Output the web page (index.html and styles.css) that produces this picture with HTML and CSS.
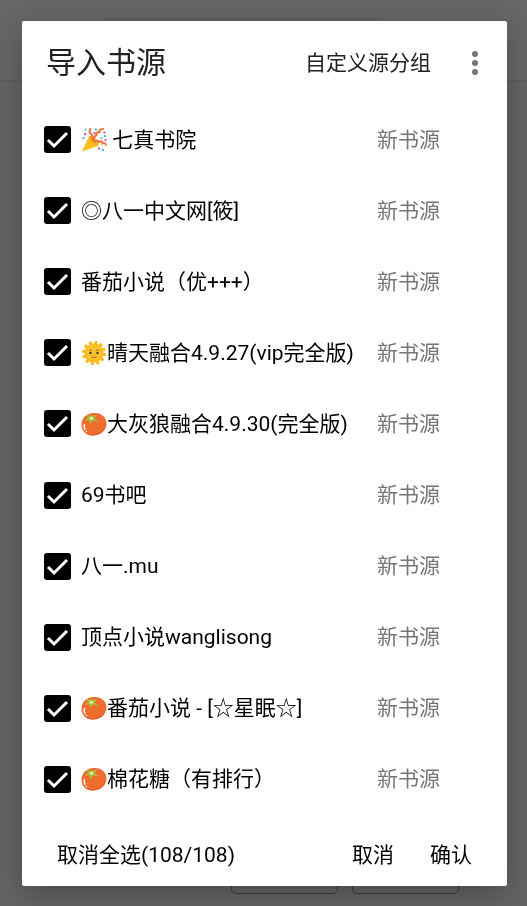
FILE: index.html
```html
<!DOCTYPE html>
<html lang="zh-CN">
<head>
  <meta charset="UTF-8" />
  <meta name="viewport" content="width=device-width, initial-scale=1.0">
  <title>导入书源</title>
  <link rel="stylesheet" href="styles.css">
</head>
<body>
  <!-- 图标 -->
  <svg class="sprite" aria-hidden="true">
    <symbol id="party" viewBox="0 0 26 26">
      <path d="M8 9 1 24.5 17 19Q16 13 8 9z" fill="#fbc21d"/>
      <path d="M8 9Q8 15 17 19 19 17 15 12 10 7 8 9z" fill="#f0ae1c"/>
      <path d="M9.500 2Q7.500 5 10 7T11 13M22 2Q18 2 18.500 5 15 5 15.500 8 13 9 12.500 13M13.500 15Q16 12 18 15 21 13 21.500 16.500 24 15 25 18" fill="none" stroke="#f0713c" stroke-width="2" stroke-linecap="round"/>
      <path d="M3.500 1.500h2v2h-2zM14 1.500h2v2h-2zM23 8h2v2h-2zM1.500 10h2v2h-2zM19.500 10h2v2h-2zM21 22h2v2h-2z" fill="#4fbbe0"/>
      <path d="M3 6h2v2H3zM12.500 5h2v2h-2zM22.500 4.500h2v2h-2zM17 20.500h2v2h-2zM23.500 12h2v2h-2z" fill="#e3518f"/>
    </symbol>
    <symbol id="sun" viewBox="0 0 26 26">
      <circle cx="13" cy="13" r="10.500" fill="none" stroke="#f9bd18" stroke-width="3" stroke-dasharray="3 2.500"/>
      <circle cx="13" cy="13" r="9.500" fill="#f9b817"/>
      <circle cx="13" cy="12.500" r="8" fill="#fbc02d"/>
      <path d="M8 10.500q1.500-1 3 0M15 10.500q1.500-1 3 0M10.500 17q2.500 1.500 5 0" fill="none" stroke="#ad6812"/>
      <circle cx="9.500" cy="13" r="1.200" fill="#4e342e"/>
      <circle cx="16.500" cy="13" r="1.200" fill="#4e342e"/>
      <path d="M12 15h2" stroke="#e59613"/>
    </symbol>
    <symbol id="tomato" viewBox="0 0 26 26">
      <path d="M13 2C20 1.500 25.500 6 25.500 12.500 25.500 19 20 24.500 12 24.500 5 24.500 .5 20 .5 14 .5 7 5 2.500 13 2z" fill="#ef6c2f"/>
      <path d="M24.500 15Q22 22 14 23 7 24 3 20 6 24.500 12 24.500 22 24 24.500 15z" fill="#e25c2b"/>
      <path d="M9 2 10.500 5.500 16 3.500 13.500 7.500 18 10.500 12 9.500 9 13 8.500 9 3.500 10 7 6.500 5 4 9 5z" fill="#a9c23a"/>
      <circle cx="10.500" cy="7.200" r="1.500" fill="#edf5c4"/>
      <path d="M3.500 13.500q-1 3 .5 5" fill="none" stroke="#fff" stroke-width="1.500" stroke-linecap="round"/>
      <circle cx="5.500" cy="20.500" r=".8" fill="#fff"/>
    </symbol>
  </svg>

  <!-- 底层页面 -->
  <div class="page" aria-hidden="true">
    <div class="page-top"><div class="page-search"></div></div>
    <div class="page-main"></div>
    <div class="page-bottom">
      <div class="page-chip"></div>
      <div class="page-chip"></div>
    </div>
  </div>

  <!-- 对话框 -->
  <div class="dialog" role="dialog" aria-labelledby="title">
    <header class="dialog-header">
      <h1 id="title">导入书源</h1>
      <button class="group-button" type="button">自定义源分组</button>
      <button class="more-button" type="button" aria-label="更多">
        <svg width="6" height="24" viewBox="0 0 6 24" fill="#757575">
          <circle cx="3" cy="3" r="3"/>
          <circle cx="3" cy="12" r="3"/>
          <circle cx="3" cy="21" r="3"/>
        </svg>
      </button>
    </header>

    <ul class="source-list">
      <li>
        <label><input type="checkbox" checked><span class="name"><svg class="emoji" role="img" aria-label="🎉"><use href="#party"/></svg> 七真书院</span></label>
        <span class="state">新书源</span>
      </li>
      <li>
        <label><input type="checkbox" checked><span class="name">◎八一中文网[筱]</span></label>
        <span class="state">新书源</span>
      </li>
      <li>
        <label><input type="checkbox" checked><span class="name">番茄小说（优+++）</span></label>
        <span class="state">新书源</span>
      </li>
      <li>
        <label><input type="checkbox" checked><span class="name"><svg class="emoji" role="img" aria-label="🌞"><use href="#sun"/></svg>晴天融合4.9.27(vip完全版)</span></label>
        <span class="state">新书源</span>
      </li>
      <li>
        <label><input type="checkbox" checked><span class="name"><svg class="emoji" role="img" aria-label="🍅"><use href="#tomato"/></svg>大灰狼融合4.9.30(完全版)</span></label>
        <span class="state">新书源</span>
      </li>
      <li>
        <label><input type="checkbox" checked><span class="name">69书吧</span></label>
        <span class="state">新书源</span>
      </li>
      <li>
        <label><input type="checkbox" checked><span class="name">八一.mu</span></label>
        <span class="state">新书源</span>
      </li>
      <li>
        <label><input type="checkbox" checked><span class="name">顶点小说wanglisong</span></label>
        <span class="state">新书源</span>
      </li>
      <li>
        <label><input type="checkbox" checked><span class="name"><svg class="emoji" role="img" aria-label="🍅"><use href="#tomato"/></svg>番茄小说 - [☆星眠☆]</span></label>
        <span class="state">新书源</span>
      </li>
      <li>
        <label><input type="checkbox" checked><span class="name"><svg class="emoji" role="img" aria-label="🍅"><use href="#tomato"/></svg>棉花糖（有排行）</span></label>
        <span class="state">新书源</span>
      </li>
    </ul>

    <footer class="dialog-footer">
      <button class="select-button" type="button">取消全选(108/108)</button>
      <button type="button">取消</button>
      <button type="button">确认</button>
    </footer>
  </div>
</body>
</html>
```

FILE: styles.css
```css
/* 通用样式 */
* {
  box-sizing: border-box;
}

body {
  display: flex;
  min-height: 100vh;
  margin: 0;
  padding: 21px 20px 20px 22px;
  background-color: #646464;
  color: #000;
  font-family: Roboto, "Noto Sans CJK SC", sans-serif;
  font-size: 21px;
  line-height: 30px;
}

button {
  padding: 0;
  border: none;
  background: none;
  color: inherit;
  font: inherit;
  white-space: nowrap;
  cursor: pointer;
}

.sprite {
  position: absolute;
  width: 0;
  height: 0;
}

/* 底层页面 */
.page {
  position: fixed;
  inset: 0;
  display: flex;
  flex-direction: column;
}

.page-top {
  height: 82px;
  padding: 17px 132px 0 88px;
  border-bottom: 2px solid #5d5d5d;
  background-color: #666;
}

.page-search {
  height: 48px;
  border-radius: 24px;
  background-color: #606060;
}

.page-main {
  flex: 1;
}

.page-bottom {
  display: flex;
  justify-content: flex-end;
  align-items: flex-end;
  gap: 14px;
  height: 73px;
  padding: 0 68px 12px 0;
  border-top: 1px solid #5e5e5e;
}

.page-chip {
  width: 107px;
  height: 44px;
  border: 1px solid #3c3c3c;
  border-radius: 5px;
}

/* 对话框 */
.dialog {
  position: relative;
  display: flex;
  flex: 1;
  flex-direction: column;
  min-width: 0;
  border-radius: 2px;
  background-color: #fff;
  box-shadow: 0 10px 30px rgba(0, 0, 0, 0.25);
}

.dialog-header {
  display: flex;
  align-items: center;
  height: 83px;
  padding: 0 24px;
  color: #212121;
}

.dialog-header h1 {
  flex: 1;
  margin: 0;
  font-size: 30px;
  font-weight: 400;
  line-height: 42px;
}

.more-button {
  display: flex;
  justify-content: flex-end;
  width: 52px;
  padding-right: 5px;
}

/* 书源列表 */
.source-list {
  display: flex;
  flex: 1;
  flex-direction: column;
  margin: 0;
  padding: 0;
  list-style: none;
}

.source-list li {
  display: flex;
  flex: 1;
  align-items: center;
  min-height: 48px;
  padding: 0 67px 0 22px;
}

.source-list label {
  display: flex;
  flex: 1;
  align-items: center;
  gap: 10px;
  min-width: 0;
}

.source-list input {
  flex: none;
  appearance: none;
  width: 27px;
  height: 27px;
  margin: 0;
  border: 2px solid #000;
  border-radius: 3px;
}

.source-list input:checked {
  background: #000 url("data:image/svg+xml,%3Csvg xmlns='http://www.w3.org/2000/svg' viewBox='0 0 23 23'%3E%3Cpath d='M2 12l6 6L21 5' fill='none' stroke='white' stroke-width='3'/%3E%3C/svg%3E") center / 23px 23px no-repeat;
}

.name {
  white-space: nowrap;
}

.emoji {
  width: 26px;
  height: 26px;
  vertical-align: -6px;
}

.state {
  color: #757575;
}

/* 底部按钮 */
.dialog-footer {
  display: flex;
  align-items: center;
  gap: 36px;
  height: 71px;
  padding: 8px 35px 0;
}

.select-button {
  margin-right: auto;
}
```
